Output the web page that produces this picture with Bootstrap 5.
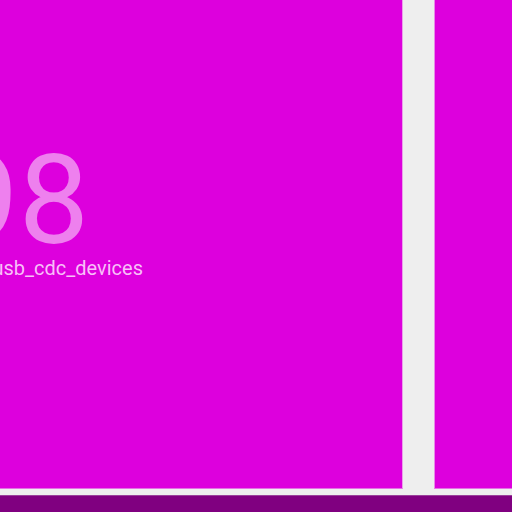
<!DOCTYPE html>
<html lang="en">
<head>
<meta charset="utf-8">
<meta name="viewport" content="width=device-width, initial-scale=1">
<title>usb_cdc_devices</title>
<link href="https://cdn.jsdelivr.net/npm/bootstrap@5.3.0/dist/css/bootstrap.min.css" rel="stylesheet">
<style>
body { background: #eee; font-family: Roboto, sans-serif; }
.board { gap: 31px; padding-bottom: 6px; }
.tile { background: #dd00dd; border-bottom: 1px solid #e66fe6; }
.tile-main { flex: 1 1 0; border-right: 1px solid #eba0eb; }
.tile-next { flex: 0 0 78px; border-left: 1px solid #e88be8; }
.metric { width: 143px; margin-top: -63px; color: #f8bff8; }
.metric-value { font-size: 125px; line-height: 111px; color: #ee80ee; padding-right: 54px; }
.metric-name { font-size: 20px; line-height: 24px; }
.footer-bar { height: 17px; background: #800080; border-top: 1px solid #9b409b; }
</style>
</head>
<body class="vh-100 d-flex flex-column overflow-hidden">
<main class="board d-flex flex-grow-1">
<section class="tile tile-main d-flex align-items-center overflow-hidden">
<div class="metric d-flex flex-column align-items-end text-nowrap">
<div class="metric-value">98</div>
<div class="metric-name">usb_cdc_devices</div>
</div>
</section>
<section class="tile tile-next"></section>
</main>
<footer class="footer-bar"></footer>
<script src="https://cdn.jsdelivr.net/npm/bootstrap@5.3.0/dist/js/bootstrap.bundle.min.js"></script>
</body>
</html>
